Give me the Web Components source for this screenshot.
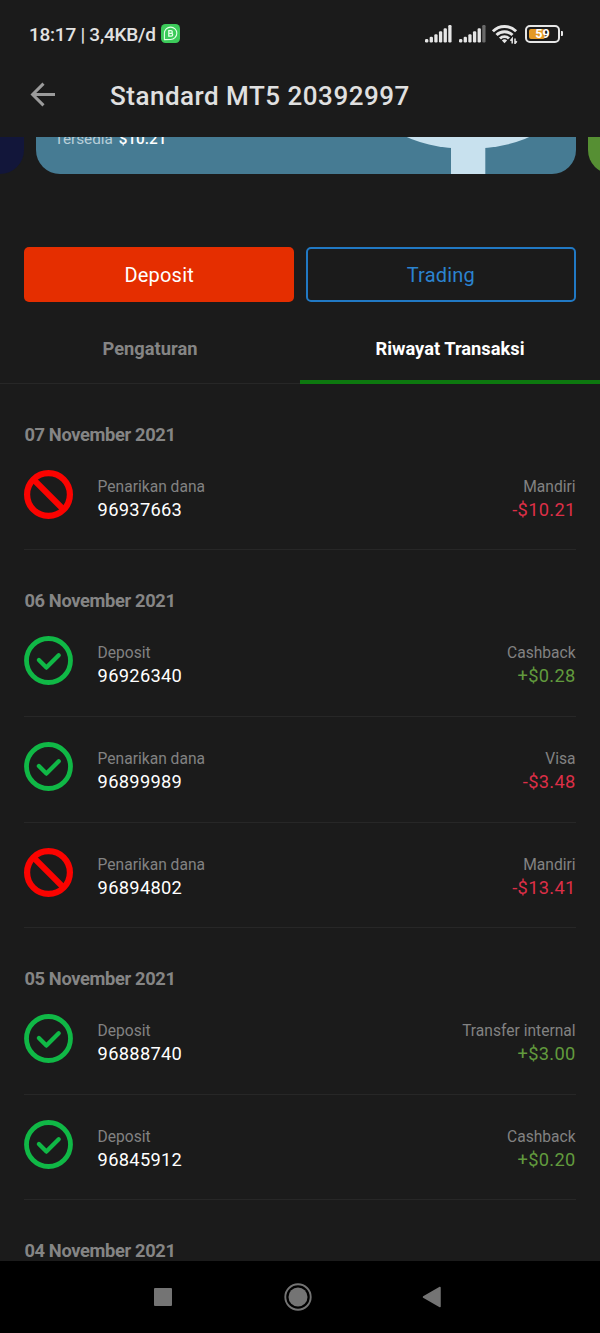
<!DOCTYPE html>
<html lang="id">
<head>
<meta charset="utf-8">
<meta name="viewport" content="width=device-width, initial-scale=1">
<title>Standard MT5 20392997</title>
<style>
  html, body {
    margin: 0;
    height: 100%;
    background: #1b1b1b;
  }

  body {
    font-family: Roboto, "Liberation Sans", sans-serif;
    color: #fff;
    overflow: hidden;
  }
</style>
</head>
<body>
<account-screen>
  <status-bar slot="top" time="18:17" speed="3,4KB/d" battery="59"></status-bar>
  <app-header slot="top">Standard MT5 20392997</app-header>

  <account-cards available="$10.21"></account-cards>
  <action-row>
    <action-button kind="primary">Deposit</action-button>
    <action-button kind="outline">Trading</action-button>
  </action-row>
  <tab-bar>
    <tab-item>Pengaturan</tab-item>
    <tab-item active>Riwayat Transaksi</tab-item>
  </tab-bar>

  <day-group date="07 November 2021">
    <transaction-row status="rejected" type="Penarikan dana" number="96937663" method="Mandiri" amount="-$10.21"></transaction-row>
  </day-group>
  <day-group date="06 November 2021">
    <transaction-row status="done" type="Deposit" number="96926340" method="Cashback" amount="+$0.28"></transaction-row>
    <transaction-row status="done" type="Penarikan dana" number="96899989" method="Visa" amount="-$3.48"></transaction-row>
    <transaction-row status="rejected" type="Penarikan dana" number="96894802" method="Mandiri" amount="-$13.41"></transaction-row>
  </day-group>
  <day-group date="05 November 2021">
    <transaction-row status="done" type="Deposit" number="96888740" method="Transfer internal" amount="+$3.00"></transaction-row>
    <transaction-row status="done" type="Deposit" number="96845912" method="Cashback" amount="+$0.20"></transaction-row>
  </day-group>
  <day-group date="04 November 2021"></day-group>

  <nav-bar slot="bottom"></nav-bar>
</account-screen>

<script>
// Base class: every element only has to give its template
class BaseElement extends HTMLElement {
  constructor() {
    super();
    this.attachShadow({ mode: "open" });
  }

  attr(name) {
    return this.getAttribute(name) || "";
  }

  connectedCallback() {
    const template = document.createElement("template");
    template.innerHTML = this.getStyles() + this.getTemplate();
    this.shadowRoot.replaceChildren(template.content.cloneNode(true));
  }
}

class AccountScreen extends BaseElement {
  getTemplate() {
    return `
      <slot name="top"></slot>
      <main><slot></slot></main>
      <slot name="bottom"></slot>
    `;
  }

  getStyles() {
    return `
      <style>
        :host {
          display: flex;
          flex-direction: column;
          width: 600px;
          height: 1333px;
          overflow: hidden;
        }
        main {
          flex: 1;
          min-height: 0;
          overflow: hidden;
        }
      </style>
    `;
  }
}

class StatusBar extends BaseElement {
  // Signal bars; the ones past "lit" are dimmed
  signal(lit) {
    let bars = "";
    for (let i = 0; i < 6; i++) {
      const h = [3.4, 5.6, 8.2, 11.2, 14.2, 17.4][i];
      bars += `<rect x="${i * 4.65}" y="${17.4 - h}" width="3.3" height="${h}" rx="1.2" fill="${i < lit ? "#e6e6e6" : "#6a6a6a"}"/>`;
    }
    return `<svg width="27" height="18" viewBox="0 0 27 18">${bars}</svg>`;
  }

  getTemplate() {
    return `
      <span class="text">${this.attr("time")} | ${this.attr("speed")}</span>
      <span class="app">
        <svg width="19" height="19" viewBox="0 0 19 19">
          <rect width="19" height="19" rx="4.5" fill="#3ccb5a"/>
          <path d="M3.4 15.6V9.3a6.2 6.2 0 1 1 6.2 6.2z" fill="none" stroke="#e4ffe9" stroke-width="1.1" stroke-linejoin="round"/>
          <path d="M7.8 6.7h2.2a1.3 1.3 0 0 1 0 2.6H7.8zM7.8 9.3h2.5a1.4 1.4 0 0 1 0 2.8H7.8z" fill="none" stroke="#e4ffe9" stroke-width="1.3"/>
        </svg>
      </span>
      <span class="icons">
        ${this.signal(6)}
        ${this.signal(5)}
        <svg class="wifi" width="26" height="20" viewBox="0 0 26 20">
          <g fill="none" stroke="#e6e6e6" stroke-width="2.9">
            <path d="M.9 7.3a16.3 16.3 0 0 1 23.2 0"/>
            <path d="M4.5 11a11.3 11.3 0 0 1 16 0"/>
            <path d="M8 14.5a6.4 6.4 0 0 1 9 0"/>
          </g>
          <path d="M12.5 19.2 9.9 16.6a3.7 3.7 0 0 1 5.2 0z" fill="#e6e6e6"/>
          <path d="M20.2 19.5v-5l-1.800 2.200M23 14.500v5l1.800-2.200" fill="none" stroke="#e6e6e6" stroke-width="1.500"/>
        </svg>
        <span class="battery"><span class="fill"></span><b>${this.attr("battery")}</b></span><i></i>
      </span>
    `;
  }

  getStyles() {
    return `
      <style>
        :host {
          display: flex;
          align-items: center;
          box-sizing: border-box;
          height: 67px;
          padding: 0 37px 0 29px;
          color: #e2e2e2;
          flex: none;
        }
        .text {
          padding-top: 1px;
          font-size: 19px;
          letter-spacing: -0.25px;
          font-weight: 500;
          white-space: pre;
        }
        .app {
          display: flex;
          margin-left: 5px;
        }
        .icons {
          display: flex;
          align-items: center;
          margin-left: auto;
        }
        svg + svg {
          margin-left: 6.500px;
        }
        .battery {
          display: grid;
          box-sizing: border-box;
          width: 35px;
          height: 18px;
          margin-left: 7px;
          padding: 2px;
          border: 2px solid #e6e6e6;
          border-radius: 5px;
        }
        .fill {
          grid-area: 1 / 1;
          width: 16px;
          border-radius: 2px;
          background: #e59a26;
        }
        b {
          grid-area: 1 / 1;
          place-self: center;
          font-size: 12.500px;
          line-height: 10px;
          color: #fff;
        }
        i {
          width: 2px;
          height: 5px;
          margin-left: 1px;
          border-radius: 0 1px 1px 0;
          background: #e6e6e6;
        }
      </style>
    `;
  }
}

class AppHeader extends BaseElement {
  getTemplate() {
    return `
      <svg width="26" height="26" viewBox="0 0 26 26" fill="none" stroke="#9b9b9b" stroke-width="3">
        <path d="M25 12.500H2.800M13.500 1.600 2.600 12.500 13.500 23.400"/>
      </svg>
      <h1><slot></slot></h1>
    `;
  }

  getStyles() {
    return `
      <style>
        :host {
          display: flex;
          align-items: center;
          box-sizing: border-box;
          height: 70px;
          padding: 0 30px 14px;
          flex: none;
        }
        h1 {
          margin: 1px 0 0 54px;
          font-size: 26px;
          font-weight: 500;
          letter-spacing: 0.5px;
          color: #e0e0e0;
          white-space: nowrap;
        }
      </style>
    `;
  }
}

class AccountCards extends BaseElement {
  getTemplate() {
    return `
      <div class="card previous"></div>
      <div class="card current">
        <p>Tersedia <b>${this.attr("available")}</b></p>
        <svg width="180" height="100" viewBox="0 0 180 100" fill="#c8e1ee">
          <ellipse cx="90" cy="15" rx="102" ry="60"/>
          <path d="M73 70h34.300v30H73z"/>
        </svg>
      </div>
      <div class="card next"></div>
    `;
  }

  getStyles() {
    return `
      <style>
        :host {
          display: flex;
          align-items: flex-end;
          justify-content: center;
          gap: 12px;
          height: 36.800px;
          padding-left: 11px;
          overflow: hidden;
        }
        .card {
          flex: none;
          box-sizing: border-box;
          width: 540px;
          height: 100px;
          border-radius: 24px;
          overflow: hidden;
        }
        .previous { background: #12163a; }
        .next { background: #568f33; }
        .current {
          display: flex;
          justify-content: space-between;
          align-items: flex-end;
          padding: 0 18px 0 19px;
          background: #467b93;
        }
        p {
          margin: 0 0 26px;
          font-size: 15.300px;
          line-height: 18px;
          color: #b9cfd9;
        }
        b {
          margin-left: 2px;
          font-weight: 500;
          color: #fff;
        }
      </style>
    `;
  }
}

class ActionRow extends BaseElement {
  getTemplate() {
    return `<slot></slot>`;
  }

  getStyles() {
    return `
      <style>
        :host {
          display: flex;
          gap: 12px;
          padding: 73px 24.400px 0;
        }
      </style>
    `;
  }
}

class ActionButton extends BaseElement {
  getTemplate() {
    return `<button><slot></slot></button>`;
  }

  getStyles() {
    return `
      <style>
        :host {
          display: flex;
          flex: 1;
          height: 55px;
        }
        button {
          flex: 1;
          padding: 2px 0 0;
          border: 0;
          border-radius: 5px;
          font: 400 20px Roboto, "Liberation Sans", sans-serif;
          letter-spacing: 0.2px;
          color: #fff;
          background: #e52e00;
        }
        :host([kind="outline"]) button {
          border: 2px solid #2179c4;
          color: #2b83cf;
          background: none;
        }
      </style>
    `;
  }
}

class TabBar extends BaseElement {
  getTemplate() {
    return `<slot></slot>`;
  }

  getStyles() {
    return `
      <style>
        :host {
          display: flex;
          height: 82px;
        }
      </style>
    `;
  }
}

class TabItem extends BaseElement {
  getTemplate() {
    return `<slot></slot>`;
  }

  getStyles() {
    return `
      <style>
        :host {
          display: flex;
          flex: 1;
          align-items: flex-start;
          justify-content: center;
          box-sizing: border-box;
          padding-top: 36px;
          border-bottom: 1.500px solid #272727;
          font-size: 18.300px;
          line-height: 22px;
          font-weight: 700;
          color: #858585;
        }
        :host([active]) {
          border-bottom: 4px solid #0d780f;
          color: #fff;
        }
      </style>
    `;
  }
}

class DayGroup extends BaseElement {
  getTemplate() {
    return `
      <h2>${this.attr("date")}</h2>
      <slot></slot>
    `;
  }

  getStyles() {
    return `
      <style>
        :host {
          display: block;
          padding: 0 24.400px;
        }
        h2 {
          margin: 0;
          padding: 40px 0 0;
          height: 21px;
          font-size: 18.300px;
          line-height: 21px;
          font-weight: 700;
          letter-spacing: -0.35px;
          color: #858585;
        }
      </style>
    `;
  }
}

class TransactionRow extends BaseElement {
  getIcon() {
    if (this.attr("status") === "done") {
      return `
        <svg width="49" height="49" viewBox="0 0 49 49" fill="none" stroke="#10b846">
          <circle cx="24.500" cy="24.500" r="22" stroke-width="4.800"/>
          <path d="M14.900 24.100 22.400 31.600 34.700 19.300" stroke-width="4.300" stroke-linecap="round" stroke-linejoin="round"/>
        </svg>
      `;
    }
    return `
      <svg width="49" height="49" viewBox="0 0 49 49" fill="none" stroke="#fb0300" stroke-width="6.200">
        <circle cx="24.500" cy="24.500" r="21.400"/>
        <path d="M9.400 9.400 39.600 39.600"/>
      </svg>
    `;
  }

  getTemplate() {
    const sign = this.attr("amount").startsWith("-") ? "minus" : "plus";
    return `
      ${this.getIcon()}
      <div>
        <span class="label">${this.attr("type")}</span>
        <span class="value">${this.attr("number")}</span>
      </div>
      <div class="right">
        <span class="label">${this.attr("method")}</span>
        <span class="value ${sign}">${this.attr("amount")}</span>
      </div>
    `;
  }

  getStyles() {
    return `
      <style>
        :host {
          display: flex;
          align-items: flex-start;
          box-sizing: border-box;
          height: 105.600px;
          padding-top: 25px;
          border-bottom: 1.500px solid #272727;
        }
        svg {
          flex: none;
          margin-right: 24.200px;
        }
        div {
          display: flex;
          flex-direction: column;
          padding-top: 6px;
        }
        .right {
          margin-left: auto;
          text-align: right;
        }
        .label {
          font-size: 15.600px;
          line-height: 22px;
          color: #828282;
        }
        .value {
          font-size: 18.300px;
          line-height: 23px;
          letter-spacing: 0.3px;
          color: #fff;
        }
        .minus { color: #dc2f47; }
        .plus { color: #619a3d; }
      </style>
    `;
  }
}

class NavBar extends BaseElement {
  getTemplate() {
    return `
      <svg width="28" height="28" viewBox="0 0 28 28"><rect x="5" y="5" width="18" height="18" rx="1" fill="#747474"/></svg>
      <svg width="28" height="28" viewBox="0 0 28 28">
        <circle cx="14" cy="14" r="12.700" fill="none" stroke="#747474" stroke-width="1.900"/>
        <circle cx="14" cy="14" r="9.500" fill="#747474"/>
      </svg>
      <svg width="28" height="28" viewBox="0 0 28 28"><path d="M5.500 14 22 4.500v19z" fill="#747474" stroke="#747474" stroke-width="1.500" stroke-linejoin="round"/></svg>
    `;
  }

  getStyles() {
    return `
      <style>
        :host {
          display: flex;
          align-items: center;
          justify-content: space-between;
          box-sizing: border-box;
          flex: none;
          height: 72px;
          padding: 0 154px 0 149px;
          background: #000;
        }
      </style>
    `;
  }
}

customElements.define("account-screen", AccountScreen);
customElements.define("status-bar", StatusBar);
customElements.define("app-header", AppHeader);
customElements.define("account-cards", AccountCards);
customElements.define("action-row", ActionRow);
customElements.define("action-button", ActionButton);
customElements.define("tab-bar", TabBar);
customElements.define("tab-item", TabItem);
customElements.define("day-group", DayGroup);
customElements.define("transaction-row", TransactionRow);
customElements.define("nav-bar", NavBar);
</script>
</body>
</html>
